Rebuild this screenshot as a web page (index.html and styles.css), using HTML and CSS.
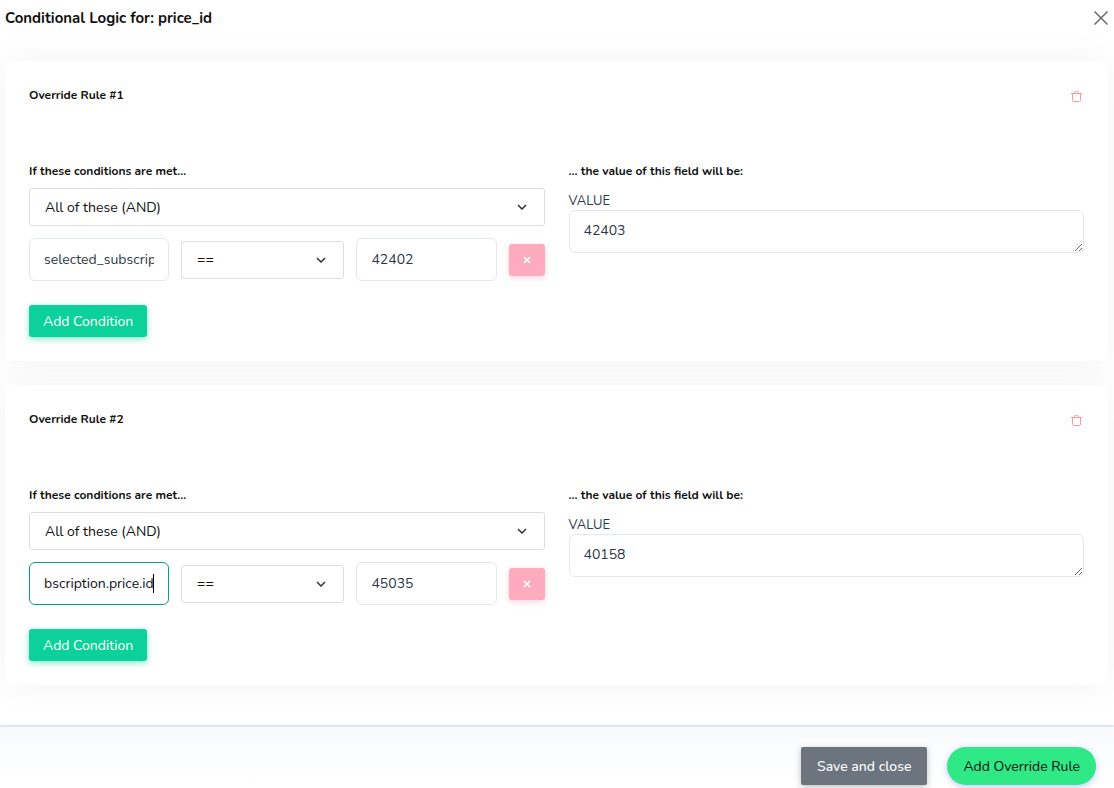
FILE: index.html
```html
<!DOCTYPE html>
<html lang="en">
<head>
    <meta charset="UTF-8">
    <meta name="viewport" content="width=device-width, initial-scale=1.0">
    <title>Conditional Logic</title>
    <link rel="stylesheet" href="styles.css">
</head>
<body>
    <header class="modal-header">
        <h1>Conditional Logic for: price_id</h1>
        <button type="button" class="close-btn" aria-label="Close">
            <svg width="14" height="14" viewBox="0 0 14 14"><path d="M0.5 0.5L13.5 13.5M13.5 0.5L0.5 13.5" stroke="#6b6b6b" stroke-width="1.5" fill="none"/></svg>
        </button>
    </header>

    <main class="rules">
        <section class="card">
            <div class="card-top">
                <h2>Override Rule #1</h2>
                <button type="button" class="trash-btn" aria-label="Delete rule 1">
                    <svg width="11" height="11" viewBox="0 0 11 11" fill="none" stroke="#f79a9a"><path d="M0 2.5H11M1.5 2.5V9.5Q1.5 10.5 2.5 10.5H8.5Q9.5 10.5 9.5 9.5V2.5M3.5 2.5V1.5Q3.5 0.5 4.5 0.5H6.5Q7.5 0.5 7.5 1.5V2.5"/></svg>
                </button>
            </div>
            <div class="columns">
                <div class="conditions">
                    <h3>If these conditions are met...</h3>
                    <select class="match" aria-label="Match type">
                        <option>All of these (AND)</option>
                        <option>Any of these (OR)</option>
                    </select>
                    <div class="condition">
                        <input type="text" value="selected_subscrip" aria-label="Field">
                        <select aria-label="Operator">
                            <option>==</option>
                            <option>!=</option>
                        </select>
                        <input type="text" value="42402" aria-label="Compare to">
                        <button type="button" class="remove-btn" aria-label="Remove condition">
                            <svg width="8" height="8" viewBox="0 0 8 8"><path d="M1 1L7 7M7 1L1 7" stroke="#fff" stroke-width="1.6"/></svg>
                        </button>
                    </div>
                    <button type="button" class="add-btn">Add Condition</button>
                </div>
                <div class="result">
                    <h3>... the value of this field will be:</h3>
                    <label for="value1">VALUE</label>
                    <textarea id="value1" rows="1">42403</textarea>
                </div>
            </div>
        </section>

        <section class="card">
            <div class="card-top">
                <h2>Override Rule #2</h2>
                <button type="button" class="trash-btn" aria-label="Delete rule 2">
                    <svg width="11" height="11" viewBox="0 0 11 11" fill="none" stroke="#f79a9a"><path d="M0 2.5H11M1.5 2.5V9.5Q1.5 10.5 2.5 10.5H8.5Q9.5 10.5 9.5 9.5V2.5M3.5 2.5V1.5Q3.5 0.5 4.5 0.5H6.5Q7.5 0.5 7.5 1.5V2.5"/></svg>
                </button>
            </div>
            <div class="columns">
                <div class="conditions">
                    <h3>If these conditions are met...</h3>
                    <select class="match" aria-label="Match type">
                        <option>All of these (AND)</option>
                        <option>Any of these (OR)</option>
                    </select>
                    <div class="condition">
                        <div class="active-field">
                            <input type="text" class="active" value="bscription.price.id" aria-label="Field">
                            <span class="caret"></span>
                        </div>
                        <select aria-label="Operator">
                            <option>==</option>
                            <option>!=</option>
                        </select>
                        <input type="text" value="45035" aria-label="Compare to">
                        <button type="button" class="remove-btn" aria-label="Remove condition">
                            <svg width="8" height="8" viewBox="0 0 8 8"><path d="M1 1L7 7M7 1L1 7" stroke="#fff" stroke-width="1.6"/></svg>
                        </button>
                    </div>
                    <button type="button" class="add-btn">Add Condition</button>
                </div>
                <div class="result">
                    <h3>... the value of this field will be:</h3>
                    <label for="value2">VALUE</label>
                    <textarea id="value2" rows="1">40158</textarea>
                </div>
            </div>
        </section>
    </main>

    <footer class="modal-footer">
        <button type="button" class="save-btn">Save and close</button>
        <button type="button" class="rule-btn">Add Override Rule</button>
    </footer>
</body>
</html>
```
FILE: styles.css
```css
* {
    box-sizing: border-box;
}

body {
    margin: 0;
    min-height: 100vh;
    display: flex;
    flex-direction: column;
    overflow-x: hidden;
    background-color: #fff;
    color: #111;
    font-family: Nunito, Lato, sans-serif;
    font-size: 14px;
}

h1, h2, h3 {
    margin: 0;
    font-weight: 700;
}

button, input, select, textarea {
    font-family: inherit;
    font-size: 14px;
    margin: 0;
}

button {
    border: none;
    cursor: pointer;
}

.modal-header {
    display: flex;
    justify-content: space-between;
    align-items: center;
    height: 36px;
    padding: 0 6px 0 5px;
}

h1 {
    font-size: 15px;
    line-height: 20px;
}

.close-btn {
    display: flex;
    padding: 0;
    background: none;
}

.rules {
    display: flex;
    flex-direction: column;
    gap: 24px;
    padding: 25px 6px 40px 5px;
}

.card {
    padding: 24px;
    background-color: #fff;
    border-radius: 4px;
    box-shadow: 0 0 40px rgba(0, 0, 0, 0.05);
}

/* keep the second shadow off the first card */
.card + .card {
    clip-path: inset(-24px -40px -40px -40px);
}

.card-top {
    display: flex;
    justify-content: space-between;
    align-items: flex-start;
    height: 76px;
}

h2, h3 {
    font-size: 12px;
    line-height: 20px;
}

.trash-btn {
    display: flex;
    padding: 6px 2px;
    background: none;
}

.columns {
    display: grid;
    grid-template-columns: 1fr 1fr;
    gap: 24px;
}

h3 {
    margin-bottom: 7px;
}

select {
    width: 100%;
    height: 38px;
    padding: 0 15px;
    border: 1px solid #dadde3;
    border-radius: 3px;
    color: #111;
    appearance: none;
    background: #fff url("data:image/svg+xml,%3Csvg xmlns='http://www.w3.org/2000/svg' width='10' height='6' viewBox='0 0 10 6'%3E%3Cpath d='M1 1l4 4 4-4' fill='none' stroke='%23333' stroke-width='1.5'/%3E%3C/svg%3E") no-repeat right 17px center;
}

.condition {
    display: grid;
    grid-template-columns: 6fr 7fr 6fr 36px;
    align-items: center;
    gap: 12px;
    margin: 12px 0 24px;
}

input, textarea {
    display: block;
    width: 100%;
    height: 43px;
    padding: 0 14px;
    border: 1px solid #e2e8f0;
    border-radius: 6px;
    background-color: #fff;
    color: #2d3748;
    outline: none;
}

textarea {
    min-height: 43px;
    padding: 10px 14px;
    line-height: 20px;
    resize: vertical;
    overflow: hidden;
}

.active-field {
    position: relative;
}

.active {
    border-color: #0e9f78;
    color: #111;
}

.caret {
    position: absolute;
    top: 12px;
    right: 15px;
    width: 1px;
    height: 19px;
    background-color: #000;
}

.remove-btn {
    display: flex;
    justify-content: center;
    align-items: center;
    height: 32px;
    border-radius: 3px;
    background-color: #fdabbd;
    box-shadow: 0 2px 6px rgba(253, 171, 189, 0.5);
}

.add-btn {
    display: block;
    height: 32px;
    padding: 0 14px;
    border-radius: 3px;
    background-color: #0cd19a;
    box-shadow: 0 2px 6px rgba(12, 209, 154, 0.5);
    color: #fff;
}

label {
    display: block;
    margin-top: 10px;
    color: #2d3748;
    font-size: 13px;
    line-height: 20px;
}

.result h3 {
    margin-bottom: 0;
}

.result label {
    margin-bottom: -1px;
}

.modal-footer {
    flex: 1;
    display: flex;
    justify-content: flex-end;
    align-items: flex-start;
    gap: 20px;
    padding: 20px 18px 3px;
    border-top: 2px solid #e2e8f0;
    background: linear-gradient(#f8fafc, #fff);
    box-shadow: 0 -1px 3px rgba(0, 0, 0, 0.04);
}

.save-btn, .rule-btn {
    height: 38px;
    padding: 0 16px;
}

.save-btn {
    border-radius: 2px;
    background-color: #6c757d;
    box-shadow: 0 2px 6px rgba(0, 0, 0, 0.25);
    color: #fff;
    font-weight: 500;
}

.rule-btn {
    border-radius: 19px;
    background-color: #2fe986;
    box-shadow: 0 2px 6px rgba(103, 119, 239, 0.4);
    color: #111;
}
```
